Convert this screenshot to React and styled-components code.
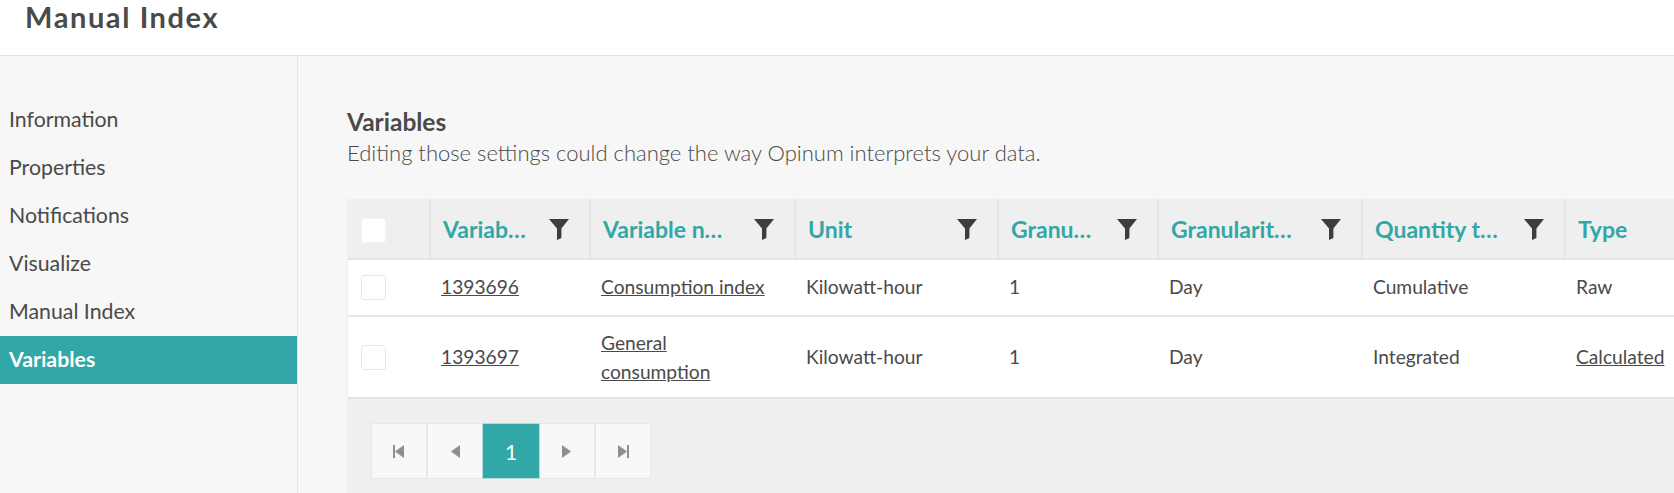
import React from 'react';
import styled, { createGlobalStyle } from "styled-components";

const GlobalStyle = createGlobalStyle`
    html, body {
        margin: 0;
        padding: 0;
        height: 100%;
        overflow: hidden;
        background: #f7f7f7;
    }
    body {
        font-family: "Lato", "Liberation Sans", sans-serif;
        color: #4a4a4a;
    }
`

const MENU = ["Information", "Properties", "Notifications", "Visualize", "Manual Index", "Variables"];

const COLUMNS = [
    { title: "Variab…", width: 160 },
    { title: "Variable n…", width: 205 },
    { title: "Unit", width: 203 },
    { title: "Granu…", width: 160 },
    { title: "Granularit…", width: 204 },
    { title: "Quantity t…", width: 203 },
    { title: "Type", width: 111, noFilter: true },
];

const ROWS = [
    { id: "1393696", name: ["Consumption index"], unit: "Kilowatt-hour", gran: "1", period: "Day", quantity: "Cumulative", type: "Raw" },
    { id: "1393697", name: ["General", "consumption"], unit: "Kilowatt-hour", gran: "1", period: "Day", quantity: "Integrated", type: "Calculated", link: true, tall: true },
];

const Funnel = () => (
    <FilterIcon viewBox="0 0 20 21" aria-hidden="true">
        <path d="M0 0H20L12.4 9.6V19L8 21V9.6Z" fill="#3d3d3d" />
    </FilterIcon>
);

const PagerIcon = ({ dir, edge }) => (
    <svg width="12" height="13" viewBox="0 0 12 13" aria-hidden="true">
        {dir === "left" ? (
            <>
                {edge && <rect x="0" y="0" width="2" height="13" fill="#8f8f8f" />}
                <path d="M11 0V13L2 6.5Z" fill="#8f8f8f" />
            </>
        ) : (
            <>
                <path d="M1 0V13L10 6.5Z" fill="#8f8f8f" />
                {edge && <rect x="10" y="0" width="2" height="13" fill="#8f8f8f" />}
            </>
        )}
    </svg>
);

const App = () => {
    return (<>
        <GlobalStyle />
        <Page>
            <Header>
                <PageTitle>Manual Index</PageTitle>
            </Header>
            <Body>
                <Sidebar>
                    {MENU.map((item) => (
                        <MenuItem key={item} $active={item === "Variables"}>{item}</MenuItem>
                    ))}
                </Sidebar>
                <Main>
                    <SectionTitle>Variables</SectionTitle>
                    <SectionText>Editing those settings could change the way Opinum interprets your data.</SectionText>
                    <Grid>
                        <Table>
                            <colgroup>
                                <col style={{ width: 81 }} />
                                {COLUMNS.map((col) => <col key={col.title} style={{ width: col.width }} />)}
                            </colgroup>
                            <thead>
                                <tr>
                                    <HeadCell><Check $head /></HeadCell>
                                    {COLUMNS.map((col) => (
                                        <HeadCell key={col.title}>
                                            <HeadInner>
                                                <HeadLabel>{col.title}</HeadLabel>
                                                {!col.noFilter && <Funnel />}
                                            </HeadInner>
                                        </HeadCell>
                                    ))}
                                </tr>
                            </thead>
                            <tbody>
                                {ROWS.map((row) => (
                                    <Row key={row.id} $tall={row.tall}>
                                        <Cell><Check /></Cell>
                                        <Cell><Link>{row.id}</Link></Cell>
                                        <Cell>
                                            {row.name.map((part) => <NameLine key={part}><Link>{part}</Link></NameLine>)}
                                        </Cell>
                                        <Cell>{row.unit}</Cell>
                                        <Cell>{row.gran}</Cell>
                                        <Cell>{row.period}</Cell>
                                        <Cell>{row.quantity}</Cell>
                                        <Cell>{row.link ? <Link>{row.type}</Link> : row.type}</Cell>
                                    </Row>
                                ))}
                            </tbody>
                        </Table>
                        <Footer>
                            <Pager>
                                <PageButton><PagerIcon dir="left" edge /></PageButton>
                                <PageButton><PagerIcon dir="left" /></PageButton>
                                <PageButton $active>1</PageButton>
                                <PageButton><PagerIcon dir="right" /></PageButton>
                                <PageButton><PagerIcon dir="right" edge /></PageButton>
                            </Pager>
                        </Footer>
                    </Grid>
                </Main>
            </Body>
        </Page>
    </>);
}

export default App;

const Page = styled.div`
    display: flex;
    flex-direction: column;
    width: 1674px;
    height: 493px;
    overflow: hidden;
`

const Header = styled.header`
    flex: none;
    box-sizing: border-box;
    height: 56px;
    padding-left: 25px;
    background: #ffffff;
    border-bottom: 1px solid #e2e2e4;
`

const PageTitle = styled.h1`
    margin: 0;
    font-size: 29px;
    line-height: 34px;
    font-weight: 700;
    letter-spacing: 1.6px;
    color: #4a4a4a;
`

const Body = styled.div`
    flex: 1;
    display: flex;
    min-height: 0;
`

const Sidebar = styled.nav`
    flex: none;
    box-sizing: border-box;
    width: 298px;
    padding-top: 40px;
    border-right: 1px solid #e3e3e3;
`

const MenuItem = styled.div`
    height: 48px;
    padding-left: 9px;
    font-size: 21.3px;
    line-height: 47px;
    font-weight: ${(props) => (props.$active ? 700 : 400)};
    color: ${(props) => (props.$active ? "#ffffff" : "#4a4a4a")};
    background: ${(props) => (props.$active ? "#31a7a7" : "transparent")};
`

const Main = styled.main`
    flex: 1;
    min-width: 0;
    padding: 50px 0 0 49px;
`

const SectionTitle = styled.h2`
    margin: 0;
    font-size: 24.5px;
    line-height: 32px;
    font-weight: 700;
    color: #4a4a4a;
`

const SectionText = styled.p`
    margin: 0 0 31px;
    font-size: 22px;
    line-height: 30px;
    font-weight: 300;
    color: #4a4a4a;
`

const Grid = styled.div`
    width: 1327px;
    background: #efefef;
    height: 300px;
    border-left: 1px solid #efefef;
`

const Table = styled.table`
    width: 1327px;
    table-layout: fixed;
    border-collapse: separate;
    border-spacing: 0;
`

const HeadCell = styled.th`
    box-sizing: border-box;
    height: 61px;
    padding: 0 12px;
    background: #efefef;
    border-top: 2px solid #efefef;
    border-left: 2px solid #e4e4e4;
    border-bottom: 2px solid #e6e6e6;
    text-align: left;
    font-size: 23px;
    font-weight: 700;
    color: #31a7a7;
    &:first-child {
        border-left: 0;
        padding-left: 13px;
    }
`

const HeadInner = styled.div`
    display: flex;
    align-items: center;
    justify-content: space-between;
    white-space: nowrap;
    padding-right: 8px;
`

const HeadLabel = styled.span`
    margin-bottom: 2px;
`

const FilterIcon = styled.svg`
    flex: none;
    width: 20px;
    height: 21px;
`

const Row = styled.tr`
    height: ${(props) => (props.$tall ? "82px" : "57px")};
    background: #ffffff;
    td {
        padding-top: ${(props) => (props.$tall ? "1px" : "0")};
    }
`

const Cell = styled.td`
    box-sizing: border-box;
    padding: 0 12px;
    font-size: 19.2px;
    line-height: 28.8px;
    color: #4a4a4a;
    border-bottom: 2px solid #e6e6e6;
    &:first-child {
        padding-left: 13px;
    }
`

const NameLine = styled.div`
    white-space: nowrap;
`

const Link = styled.a`
    color: #4a4a4a;
    text-decoration: underline;
`

const Check = styled.div`
    box-sizing: border-box;
    width: 25px;
    height: 25px;
    margin-top: ${(props) => (props.$head ? "2px" : "0")};
    background: #ffffff;
    border: 1px solid ${(props) => (props.$head ? "#f4f4f4" : "#e6e6e6")};
    border-radius: 3px;
`

const Footer = styled.div`
    padding: 24px 0 0 23px;
`

const Pager = styled.div`
    display: flex;
    width: max-content;
`

const PageButton = styled.div`
    box-sizing: border-box;
    display: flex;
    align-items: center;
    justify-content: center;
    width: ${(props) => (props.$active ? "58px" : "56px")};
    height: 56px;
    margin-left: ${(props) => (props.$active ? "-1px" : "0")};
    margin-right: ${(props) => (props.$active ? "-1px" : "0")};
    position: ${(props) => (props.$active ? "relative" : "static")};
    background: ${(props) => (props.$active ? "#31a7a7" : "#f8f8f8")};
    border: 1px solid ${(props) => (props.$active ? "#b5dcdc" : "#e8e8e8")};
    font-size: 21px;
    color: #ffffff;
`
